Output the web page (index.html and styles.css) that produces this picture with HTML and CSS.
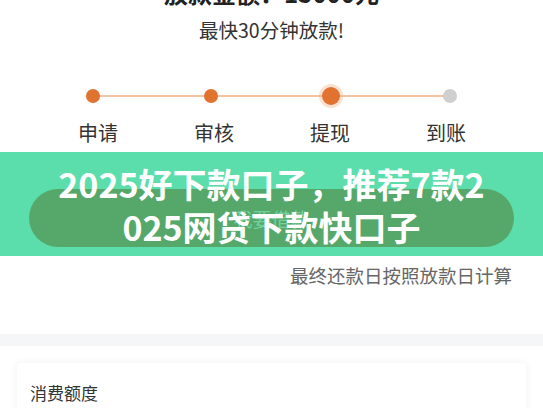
FILE: index.html
```html
<!DOCTYPE html>
<html lang="zh-CN">
<head>
    <meta charset="UTF-8">
    <meta name="viewport" content="width=device-width, initial-scale=1.0">
    <title>2025好下款口子</title>
    <link rel="stylesheet" href="styles.css">
</head>
<body>
    <div class="summary">
        <h2 class="amount">放款金额：15000元</h2>
        <p class="speed">最快30分钟放款!</p>
    </div>

    <ul class="track">
        <li class="step done"><span class="dot"></span></li>
        <li class="step done"><span class="dot"></span></li>
        <li class="step current"><span class="dot"></span></li>
        <li class="step"><span class="dot"></span></li>
    </ul>
    <ul class="labels">
        <li>申请</li>
        <li>审核</li>
        <li>提现</li>
        <li>到账</li>
    </ul>

    <div class="banner">
        <button class="apply">我要借款</button>
        <h1 class="banner-title">2025好下款口子，推荐7款2025网贷下款快口子</h1>
    </div>

    <p class="note">最终还款日按照放款日计算</p>

    <div class="divider"></div>

    <div class="card">
        <h3>消费额度</h3>
    </div>
</body>
</html>
```

FILE: styles.css
```css
body {
    margin: 0;
    padding: 0;
    background: #fff;
    font-family: "Noto Sans CJK SC", "Noto Sans", sans-serif;
    color: #333;
    overflow: hidden;
}
.summary {
    text-align: center;
}
.amount {
    margin: -25px 0 0;
    font-size: 24px;
    line-height: 36px;
    font-weight: bold;
    color: #222;
}
.speed {
    margin: 6px 0 0;
    font-size: 19.5px;
    line-height: 26px;
    color: #333;
}

/* etapas do pedido */
.track {
    list-style: none;
    margin: 44px 0 0 34px;
    padding: 0;
    display: grid;
    grid-template-columns: 117px 120px 119px 119px;
}
.step {
    position: relative;
    display: flex;
    justify-content: center;
}
.step::before,
.step::after {
    content: "";
    position: absolute;
    top: 8px;
    height: 2px;
    width: 50%;
    background: #f4c29c;
}
.step::before { left: 0; }
.step::after { right: 0; }
.step:first-child::before,
.step:last-child::after {
    display: none;
}
.dot {
    position: relative;
    z-index: 1;
    width: 14px;
    height: 14px;
    margin: 2px 0;
    border-radius: 50%;
    background: #cfcfcf;
}
.step.done .dot,
.step.current .dot {
    background: #e07330;
}
.step.current .dot {
    width: 18px;
    height: 18px;
    margin: 0;
    box-shadow: 0 0 0 3px rgba(240, 170, 120, 0.35);
}
.labels {
    list-style: none;
    margin: 14px 0 0 40px;
    padding: 0;
    display: grid;
    grid-template-columns: repeat(4, 116px);
}
.labels li {
    text-align: center;
    font-size: 20px;
    line-height: 28px;
    color: #333;
}

.banner {
    position: relative;
    margin-top: 5px;
    height: 104px;
    padding-top: 37px;
    box-sizing: border-box;
    background: #5bdeac;
}
.apply {
    display: block;
    width: calc(100% - 58px);
    height: 58px;
    margin: 0 29px;
    border: none;
    border-radius: 29px;
    background: #56a86a;
    color: #72d29f;
    font-family: inherit;
    font-size: 19px;
}
.banner-title {
    position: absolute;
    top: 10px;
    left: 54px;
    width: 435px;
    margin: 0;
    font-size: 34px;
    line-height: 43px;
    font-weight: bold;
    color: #fff;
    text-align: center;
    word-break: break-all;
}

.note {
    margin: 6px 0 0;
    padding-right: 31px;
    text-align: right;
    font-size: 18.5px;
    line-height: 26px;
    color: #666;
}
.divider {
    margin-top: 46px;
    height: 12px;
    background: #f5f6f8;
}
.card {
    margin: 17px 17px 0;
    padding: 18px 13px 20px;
    background: #fff;
    border-radius: 4px;
    box-shadow: 0 0 10px rgba(0, 0, 0, 0.06);
}
.card h3 {
    margin: 0;
    font-size: 17px;
    line-height: 24px;
    font-weight: normal;
    color: #333;
}
```
